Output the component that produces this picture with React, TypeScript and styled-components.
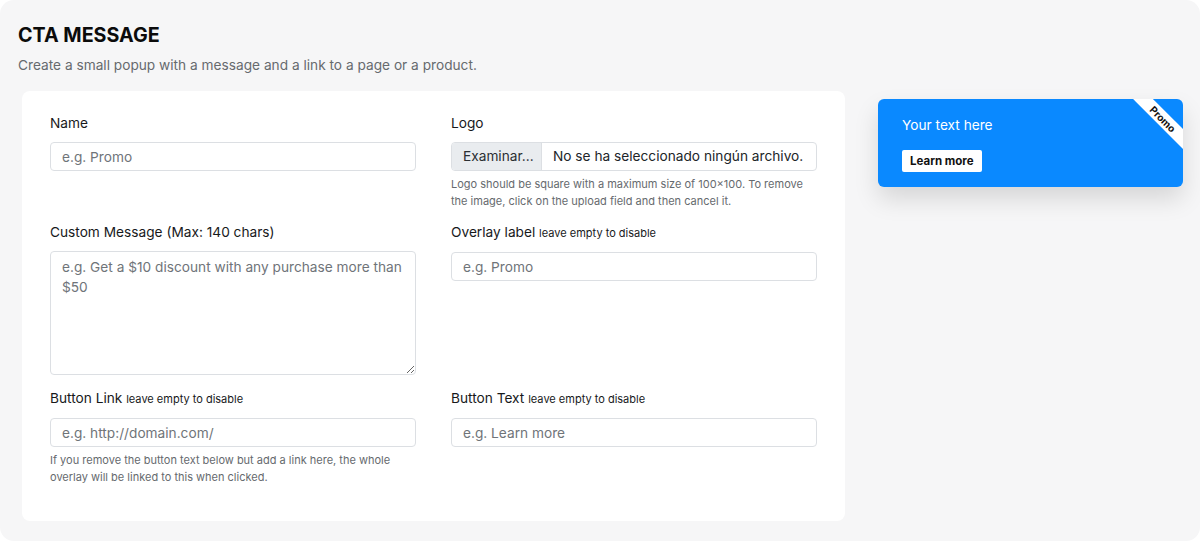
import styled, { createGlobalStyle } from 'styled-components';

const GlobalStyle = createGlobalStyle`
  html, body {
    margin: 0;
    padding: 0;
    background: #ffffff;
  }
  * {
    box-sizing: border-box;
  }
  body {
    font-family: Inter, "Noto Sans", "Liberation Sans", sans-serif;
    color: #212529;
  }
`

const Page = styled.div`
  width: 1200px;
  height: 541px;
  background: #f6f6f7;
  border-radius: 14px;
  padding: 22px 17px 20px 18px;
  overflow: hidden;
`

const Title = styled.h1`
  margin: 0;
  font-size: 19.7px;
  line-height: 26px;
  font-weight: 700;
  color: #0b0b0b;
`

const Subtitle = styled.p`
  margin: 6px 0 0;
  font-size: 13.7px;
  line-height: 22px;
  color: #666a6e;
`

const Content = styled.div`
  display: flex;
  align-items: flex-start;
  margin-top: 15px;
`

const Card = styled.div`
  width: 823px;
  height: 430px;
  margin-left: 4px;
  background: #ffffff;
  border-radius: 8px;
  padding: 22px 28px 36px;
  display: grid;
  grid-template-columns: 366px 366px;
  column-gap: 35px;
  row-gap: 13px;
  align-content: start;
`

const Field = styled.div`
  display: flex;
  flex-direction: column;
`

const Label = styled.label`
  font-size: 13.7px;
  line-height: 21px;
  margin-bottom: 8px;
  color: #17191b;
`

const Hint = styled.span`
  font-size: 11px;
`

const Input = styled.input`
  width: 100%;
  height: 29px;
  padding: 4px 11px;
  font-family: inherit;
  font-size: 13.7px;
  border: 1px solid #dcdfe3;
  border-radius: 4px;
  color: #212529;
  background: #fff;
  outline: none;
  &::placeholder {
    color: #6f7479;
  }
`

const TextArea = styled.textarea`
  width: 100%;
  height: 124px;
  padding: 5px 11px;
  font-family: inherit;
  font-size: 13.7px;
  line-height: 20px;
  border: 1px solid #dcdfe3;
  border-radius: 4px;
  color: #212529;
  outline: none;
  &::placeholder {
    color: #6f7479;
  }
`

const FileBox = styled.div`
  display: flex;
  height: 29px;
  border: 1px solid #dcdfe3;
  border-radius: 4px;
  overflow: hidden;
  font-size: 13.7px;
  line-height: 27px;
`

const FileButton = styled.span`
  width: 90px;
  padding: 0 11px;
  background: #e9ecef;
  border-right: 1px solid #dcdfe3;
  color: #2b2f33;
`

const FileName = styled.span`
  padding: 0 11px;
  color: #212529;
  white-space: nowrap;
`

const Help = styled.p`
  margin: 5px 0 0;
  font-size: 11px;
  line-height: 16.5px;
  color: #666a6e;
`

const Preview = styled.div`
  position: relative;
  width: 305px;
  height: 88px;
  margin: 8px 0 0 33px;
  padding: 16px 24px;
  background: #0a89ff;
  border-radius: 6px;
  box-shadow: 0 12px 24px rgba(0, 0, 0, 0.13);
  overflow: hidden;
`

const PreviewText = styled.div`
  font-size: 13.7px;
  line-height: 20px;
  color: #ffffff;
`

const PreviewButton = styled.button`
  display: block;
  margin-top: 15px;
  height: 22px;
  padding: 0 8px;
  border: none;
  border-radius: 2px;
  background: #ffffff;
  font-family: inherit;
  font-size: 11.5px;
  font-weight: 700;
  color: #111;
`

const Corner = styled.div`
  position: absolute;
  top: 0;
  right: 0;
  width: 60px;
  height: 60px;
  overflow: hidden;
`

const Ribbon = styled.div`
  position: absolute;
  left: -5px;
  top: 13px;
  width: 90px;
  height: 14px;
  background: #ffffff;
  transform: rotate(45deg);
  text-align: center;
  font-size: 10px;
  line-height: 14px;
  font-weight: 700;
  color: #111;
`

export default function App() {
  return (
    <>
      <GlobalStyle />
      <Page>
        <Title>CTA MESSAGE</Title>
        <Subtitle>Create a small popup with a message and a link to a page or a product.</Subtitle>
        <Content>
          <Card>
            <Field>
              <Label>Name</Label>
              <Input placeholder="e.g. Promo" />
            </Field>
            <Field>
              <Label>Logo</Label>
              <FileBox>
                <FileButton>Examinar...</FileButton>
                <FileName>No se ha seleccionado ningún archivo.</FileName>
              </FileBox>
              <Help>
                Logo should be square with a maximum size of 100×100. To remove
                <br />
                the image, click on the upload field and then cancel it.
              </Help>
            </Field>
            <Field>
              <Label>Custom Message (Max: 140 chars)</Label>
              <TextArea placeholder="e.g. Get a $10 discount with any purchase more than $50" />
            </Field>
            <Field>
              <Label>
                Overlay label <Hint>leave empty to disable</Hint>
              </Label>
              <Input placeholder="e.g. Promo" />
            </Field>
            <Field>
              <Label>
                Button Link <Hint>leave empty to disable</Hint>
              </Label>
              <Input placeholder="e.g. http://domain.com/" />
              <Help>
                If you remove the button text below but add a link here, the whole
                <br />
                overlay will be linked to this when clicked.
              </Help>
            </Field>
            <Field>
              <Label>
                Button Text <Hint>leave empty to disable</Hint>
              </Label>
              <Input placeholder="e.g. Learn more" />
            </Field>
          </Card>
          <Preview>
            <PreviewText>Your text here</PreviewText>
            <PreviewButton>Learn more</PreviewButton>
            <Corner>
              <Ribbon>Promo</Ribbon>
            </Corner>
          </Preview>
        </Content>
      </Page>
    </>
  )
}
